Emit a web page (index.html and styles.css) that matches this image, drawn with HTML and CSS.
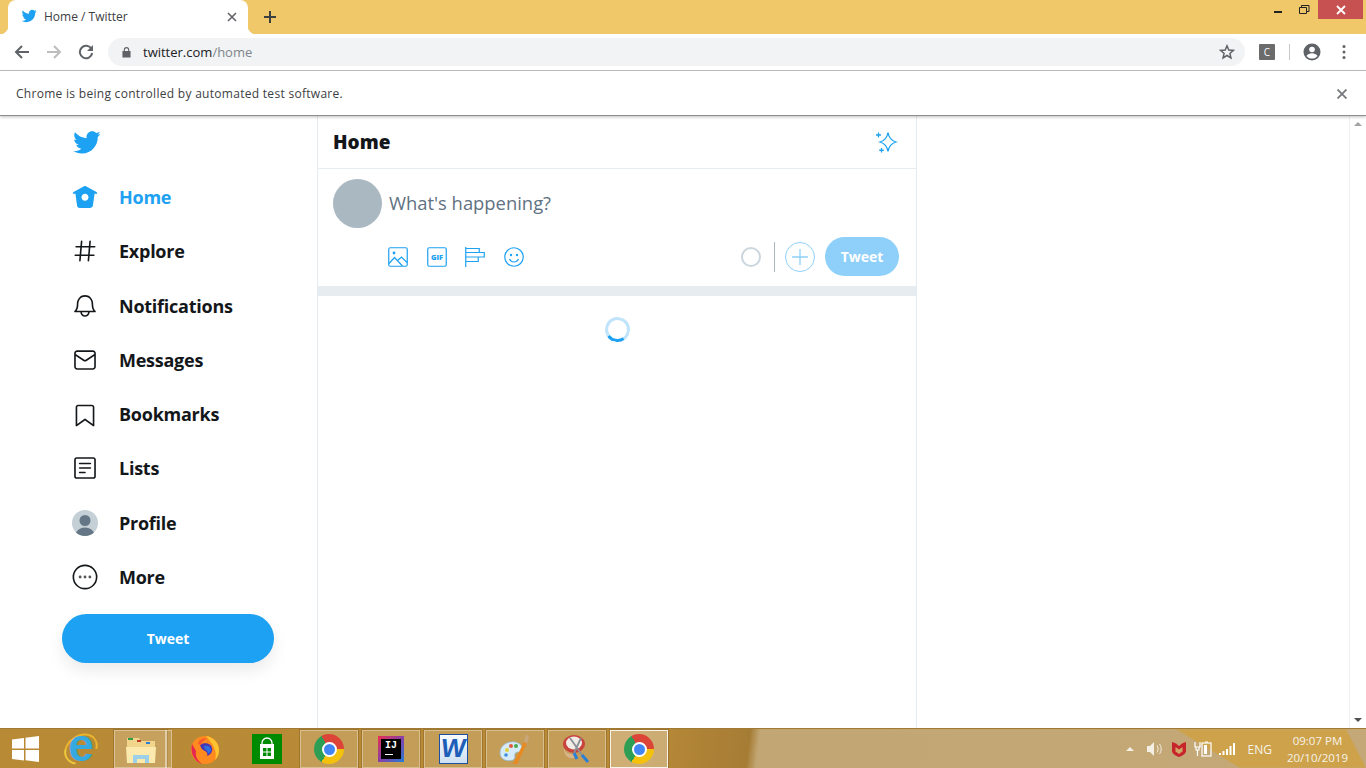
FILE: index.html
```html
<!DOCTYPE html>
<html lang="en">

<head>
  <meta charset="UTF-8">
  <title>Home / Twitter</title>
  <link rel="stylesheet" href="styles.css">
</head>

<body>
  <!-- browser frame -->
  <header class="browser">
    <div class="titlebar">
      <div class="tab">
        <svg class="tab-icon" viewBox="0 0 24 24"><path class="blue" d="M23.643 4.937c-.835.37-1.732.62-2.675.733.962-.576 1.7-1.49 2.048-2.578-.9.534-1.897.922-2.958 1.13-.85-.904-2.06-1.47-3.4-1.47-2.572 0-4.658 2.086-4.658 4.66 0 .364.042.718.12 1.06-3.873-.195-7.304-2.05-9.602-4.868-.4.69-.63 1.49-.63 2.342 0 1.616.823 3.043 2.072 3.878-.764-.025-1.482-.234-2.11-.583v.06c0 2.257 1.605 4.14 3.737 4.568-.392.106-.803.162-1.227.162-.3 0-.593-.028-.877-.082.593 1.85 2.313 3.198 4.352 3.234-1.595 1.25-3.604 1.995-5.786 1.995-.376 0-.747-.022-1.112-.065 2.062 1.323 4.51 2.093 7.14 2.093 8.57 0 13.255-7.098 13.255-13.254 0-.2-.005-.402-.014-.602.91-.658 1.7-1.477 2.323-2.41z"/></svg>
        <span class="tab-title">Home / Twitter</span>
        <svg class="tab-close" viewBox="0 0 10 10"><path d="M1 1l8 8M9 1l-8 8"/></svg>
      </div>
      <svg class="new-tab" viewBox="0 0 12 12"><path d="M6 0v12M0 6h12"/></svg>
      <div class="win-controls">
        <svg class="win-btn" viewBox="0 0 26 19"><path d="M8 12h8" stroke="#222" stroke-width="2"/></svg>
        <svg class="win-btn" viewBox="0 0 26 19"><path d="M7.500 7.500h7v6h-7zM9.500 7V5.500h7.500v6h-2.500" fill="none" stroke="#222" stroke-width="1"/></svg>
        <div class="win-close"><svg viewBox="0 0 10 10"><path d="M1 1l8 8M9 1l-8 8"/></svg></div>
      </div>
    </div>

    <div class="toolbar">
      <svg class="tool" viewBox="0 0 16 16"><path d="M15 8H2M8 2L2 8l6 6" fill="none" stroke="#5f6368" stroke-width="2"/></svg>
      <svg class="tool" viewBox="0 0 16 16"><path d="M1 8h13M8 2l6 6-6 6" fill="none" stroke="#bdbdbd" stroke-width="2"/></svg>
      <svg class="tool" viewBox="0 0 16 16"><path d="M13.500 5A6.200 6.200 0 1 0 14.200 9" fill="none" stroke="#5f6368" stroke-width="2"/><path d="M15 1v6H9z" fill="#5f6368"/></svg>
      <div class="omnibox">
        <svg class="lock" viewBox="0 0 10 12"><path d="M2 5V3.500a3 3 0 0 1 6 0V5h1.500v7H.5V5zm1.200 0h3.600V3.500a1.800 1.800 0 0 0-3.600 0z" fill="#5f6368"/></svg>
        <span class="url">twitter.com<span class="url-path">/home</span></span>
        <svg class="star" viewBox="0 0 16 16"><path d="M8 1.800l1.800 4.200 4.600.4-3.500 3 1.050 4.500L8 11.500l-3.950 2.400L5.100 9.400l-3.500-3 4.600-.4z" fill="none" stroke="#5f6368" stroke-width="1.500"/></svg>
      </div>
      <div class="ext">C</div>
      <div class="tool-sep"></div>
      <svg class="profile" viewBox="0 0 18 18"><circle cx="9" cy="9" r="8.500" fill="#5f6368"/><circle cx="9" cy="6.500" r="2.800" fill="#fff"/><path d="M3.500 13c1-2 3.500-2.800 5.500-2.800s4.500.8 5.500 2.800c-1.200 1.600-3.300 2.600-5.500 2.600s-4.300-1-5.500-2.600z" fill="#fff"/></svg>
      <svg class="dots" viewBox="0 0 4 16"><circle cx="2" cy="2.500" r="1.500"/><circle cx="2" cy="8" r="1.500"/><circle cx="2" cy="13.500" r="1.500"/></svg>
    </div>

    <div class="infobar">
      <span>Chrome is being controlled by automated test software.</span>
      <svg class="info-close" viewBox="0 0 10 10"><path d="M0.500 0.500l9 9M9.500 0.500l-9 9"/></svg>
    </div>
  </header>

  <!-- page -->
  <div class="page">
    <aside class="sidebar">
      <div class="logo">
        <svg viewBox="0 0 24 24"><path class="blue" d="M23.643 4.937c-.835.37-1.732.62-2.675.733.962-.576 1.7-1.49 2.048-2.578-.9.534-1.897.922-2.958 1.13-.85-.904-2.06-1.47-3.4-1.47-2.572 0-4.658 2.086-4.658 4.66 0 .364.042.718.12 1.06-3.873-.195-7.304-2.05-9.602-4.868-.4.69-.63 1.49-.63 2.342 0 1.616.823 3.043 2.072 3.878-.764-.025-1.482-.234-2.11-.583v.06c0 2.257 1.605 4.14 3.737 4.568-.392.106-.803.162-1.227.162-.3 0-.593-.028-.877-.082.593 1.85 2.313 3.198 4.352 3.234-1.595 1.25-3.604 1.995-5.786 1.995-.376 0-.747-.022-1.112-.065 2.062 1.323 4.51 2.093 7.14 2.093 8.57 0 13.255-7.098 13.255-13.254 0-.2-.005-.402-.014-.602.91-.658 1.7-1.477 2.323-2.41z"/></svg>
      </div>
      <nav class="nav">
        <a class="nav-item active">
          <svg class="nav-icon" viewBox="0 0 24 24"><path d="M22.580 7.350L12.475 1.897c-.297-.16-.654-.16-.95 0L1.425 7.350c-.486.264-.667.870-.405 1.356.18.335.525.525.880.525.160 0 .324-.038.475-.120l.734-.396 1.590 11.250c.216 1.214 1.270 2.096 2.500 2.096h9.600c1.230 0 2.284-.882 2.504-2.110l1.590-11.236.734.396c.485.263 1.092.082 1.354-.404.263-.486.080-1.093-.404-1.355zM12 15.435c-1.795 0-3.250-1.455-3.250-3.250s1.455-3.250 3.250-3.250 3.250 1.455 3.250 3.250-1.455 3.250-3.250 3.250z"/></svg>
          Home
        </a>
        <a class="nav-item">
          <svg class="nav-icon" viewBox="0 0 24 24"><path d="M21 7.337h-3.930l.372-4.272c.036-.412-.27-.775-.682-.812-.417-.03-.776.27-.812.683l-.383 4.400h-6.320l.37-4.270c.037-.413-.27-.776-.68-.813-.42-.03-.777.27-.813.683l-.382 4.400H3.782c-.414 0-.75.337-.75.75s.336.75.75.75H7.610l-.55 6.327H3c-.414 0-.75.336-.75.75s.336.75.75.75h3.930l-.372 4.272c-.036.412.27.775.682.812l.066.003c.385 0 .712-.295.746-.686l.383-4.400h6.320l-.37 4.270c-.036.413.27.776.682.813l.066.003c.385 0 .712-.295.746-.686l.382-4.400h3.957c.413 0 .75-.337.75-.75s-.337-.75-.75-.75H16.390l.55-6.327H21c.414 0 .75-.336.75-.75s-.336-.75-.75-.75zm-6.115 7.826h-6.320l.55-6.326h6.320l-.55 6.326z"/></svg>
          Explore
        </a>
        <a class="nav-item">
          <svg class="nav-icon" viewBox="0 0 24 24"><path d="M21.697 16.468c-.02-.016-2.140-1.640-2.103-6.030.02-2.532-.812-4.782-2.347-6.335C15.872 2.710 14.010 1.940 12.005 1.930h-.013c-2.004.01-3.866.78-5.242 2.174-1.534 1.553-2.368 3.802-2.346 6.334.037 4.330-2.020 5.967-2.102 6.030-.26.193-.366.53-.265.838.102.308.39.515.712.515h4.920c.102 2.310 1.997 4.160 4.330 4.160s4.226-1.850 4.327-4.160h4.922c.322 0 .61-.206.71-.514.103-.307-.003-.645-.263-.838zM12 20.478c-1.505 0-2.730-1.177-2.828-2.658h5.656c-.1 1.480-1.323 2.660-2.828 2.660zM4.380 16.320c.74-1.132 1.548-3.028 1.524-5.896-.018-2.160.644-3.982 1.913-5.267C8.910 4.050 10.397 3.437 12 3.430c1.603.008 3.087.62 4.180 1.728 1.270 1.285 1.933 3.106 1.915 5.267-.024 2.868.785 4.765 1.525 5.896H4.380z"/></svg>
          Notifications
        </a>
        <a class="nav-item">
          <svg class="nav-icon" viewBox="0 0 24 24"><path d="M19.250 3.018H4.750C3.233 3.018 2 4.252 2 5.770v12.495c0 1.518 1.233 2.753 2.750 2.753h14.500c1.517 0 2.750-1.235 2.750-2.753V5.770c0-1.518-1.233-2.752-2.750-2.752zm-14.500 1.500h14.500c.69 0 1.250.56 1.250 1.250v.714l-8.050 5.367c-.273.18-.626.182-.9-.002L3.500 6.482v-.714c0-.69.56-1.250 1.250-1.250zm14.500 14.998H4.750c-.69 0-1.250-.56-1.250-1.250V8.240l7.240 4.830c.383.256.822.384 1.260.384.44 0 .877-.128 1.260-.383l7.240-4.830v10.022c0 .69-.56 1.250-1.250 1.250z"/></svg>
          Messages
        </a>
        <a class="nav-item">
          <svg class="nav-icon" viewBox="0 0 24 24"><path d="M19.900 23.500c-.157 0-.312-.05-.442-.144L12 17.928l-7.458 5.430c-.228.164-.53.19-.782.06-.25-.127-.41-.385-.41-.667V5.600c0-1.240 1.010-2.250 2.250-2.250h12.798c1.240 0 2.250 1.010 2.250 2.250v17.150c0 .282-.158.54-.41.668-.106.055-.223.082-.34.082zM12 16.250c.155 0 .31.048.44.144l6.710 4.883V5.600c0-.412-.337-.75-.75-.75H5.600c-.413 0-.75.338-.75.75v15.677l6.710-4.883c.13-.096.285-.144.44-.144z"/></svg>
          Bookmarks
        </a>
        <a class="nav-item">
          <svg class="nav-icon" viewBox="0 0 24 24"><path d="M19.750 22H4.250C3.010 22 2 20.990 2 19.750V4.250C2 3.010 3.010 2 4.250 2h15.500C20.990 2 22 3.010 22 4.250v15.500c0 1.240-1.010 2.250-2.250 2.250zM4.250 3.500c-.414 0-.75.337-.75.75v15.500c0 .413.336.75.75.75h15.500c.414 0 .75-.337.75-.75V4.250c0-.413-.336-.75-.75-.75H4.250z"/><path d="M17 8.640H7c-.414 0-.75-.337-.75-.75s.336-.75.75-.75h10c.414 0 .75.336.75.75s-.336.75-.75.75zm0 4.110H7c-.414 0-.75-.336-.75-.75s.336-.75.75-.75h10c.414 0 .75.336.75.75s-.336.75-.75.75zm-5 4.110H7c-.414 0-.75-.335-.75-.75s.336-.75.75-.75h5c.414 0 .75.337.75.75s-.336.75-.75.75z"/></svg>
          Lists
        </a>
        <a class="nav-item">
          <svg class="nav-icon" viewBox="0 0 26 26"><defs><clipPath id="avatar-clip"><circle cx="13" cy="13" r="13"/></clipPath></defs><circle cx="13" cy="13" r="13" fill="#c4cfd6"/><g clip-path="url(#avatar-clip)" fill="#657786"><circle cx="13" cy="10.500" r="5.500"/><ellipse cx="13" cy="24" rx="9" ry="6.500"/></g></svg>
          Profile
        </a>
        <a class="nav-item">
          <svg class="nav-icon" viewBox="0 0 24 24"><circle cx="12" cy="12" r="10.750" fill="none" stroke="#14171a" stroke-width="1.500"/><circle cx="7.500" cy="12" r="1.300" fill="#555"/><circle cx="12" cy="12" r="1.300" fill="#555"/><circle cx="16.500" cy="12" r="1.300" fill="#555"/></svg>
          More
        </a>
      </nav>
      <button class="tweet-big">Tweet</button>
    </aside>

    <main class="feed">
      <div class="feed-head">
        <h2>Home</h2>
        <svg class="sparkle" viewBox="0 0 24 24"><path d="M14 2.500c.8 5.200 2.800 8 8 9.500-5.200 1.500-7.200 4.300-8 9.500-.8-5.200-2.800-8-8-9.500 5.200-1.500 7.200-4.300 8-9.500z" fill="none" stroke="#1da1f2" stroke-width="1.300"/><path d="M4.500 2.500v5M2 5h5M7.500 18v4.500M5.250 20.250h4.500" stroke="#1da1f2" stroke-width="1.300"/></svg>
      </div>

      <div class="compose">
        <div class="compose-top">
          <div class="avatar"></div>
          <div class="placeholder">What's happening?</div>
        </div>
        <div class="compose-bar">
          <div class="media-icons">
            <svg class="media" viewBox="0 0 20 20"><rect x=".75" y=".75" width="18.500" height="18.500" rx="1.500"/><circle cx="6" cy="6" r="1.400" class="dot"/><path d="M1 16.500l5.500-6 8 8.500M9.500 13.500l4-3.500 5.500 5.500"/></svg>
            <svg class="media" viewBox="0 0 20 20"><rect x=".75" y=".75" width="18.500" height="18.500" rx="1.500"/><text x="10" y="13" class="gif-text">GIF</text></svg>
            <svg class="media" viewBox="0 0 20 20"><path d="M.75 0v20M.75 1.500h13.500v4H.75M.75 5.500h18.500v4.500H.75M.75 10h12.500v4.500H.75"/></svg>
            <svg class="media" viewBox="0 0 20 20"><circle cx="10" cy="10" r="9.250"/><circle cx="7" cy="8" r="1.200" class="dot"/><circle cx="13" cy="8" r="1.200" class="dot"/><path d="M5.500 12c1 2 2.700 3 4.500 3s3.500-1 4.500-3"/></svg>
          </div>
          <div class="counter"></div>
          <div class="bar-sep"></div>
          <svg class="add" viewBox="0 0 30 30"><circle cx="15" cy="15" r="14.500"/><path d="M15 7v16M7 15h16"/></svg>
          <button class="tweet-small">Tweet</button>
        </div>
      </div>

      <div class="band"></div>
      <div class="loading"><div class="spinner"></div></div>
    </main>

    <div class="rightcol"></div>

    <div class="scrollbar">
      <span class="arrow-up"></span>
      <span class="arrow-down"></span>
    </div>
  </div>

  <!-- windows taskbar -->
  <footer class="taskbar">
    <div class="start">
      <svg viewBox="0 0 27 26"><path d="M0 3.500L12 2v10.500H0zM13.500 1.800L27 0v12.500H13.500zM0 14h12v10.500L0 23zM13.500 14H27v12l-13.500-1.800z" fill="#fff"/></svg>
    </div>
    <div class="task plain ie-wrap">
      <div class="ie"><span class="ie-e">e</span></div>
    </div>
    <div class="task open explorer">
      <svg class="task-icon" viewBox="0 0 32 32"><path d="M2 5h12l2 3h14v22H2z" fill="#f0d58a"/><path d="M3 5h5v2H3z" fill="#2f9e44"/><path d="M12 7h4v2h-4z" fill="#c0392b"/><path d="M21 9h4v2h-4z" fill="#2b7fd4"/><path d="M1 14h30l-1 16H2z" fill="#fbe9ad"/><path d="M8 30v-8h16v8h-4v-4h-8v4z" fill="#9ccfe8"/></svg>
    </div>
    <div class="task plain ff">
      <svg class="task-icon" viewBox="0 0 32 32"><circle cx="16" cy="17" r="14" fill="#ff8a1f"/><path d="M17 3c7 1 13 7 13 14 0 5-2 8-4 10 2-6 1-13-9-24z" fill="#ffc42f"/><path d="M3 11c-2 9 2 17 10 20-5-4-7-8-6-13z" fill="#e6264f"/><path d="M11 12c4-3 11-2 12 3 1 4-2 7-5 8 1-2 0-4-2-5-3-1-4-3-5-6z" fill="#4a35b5"/><path d="M15 13c3-1 6 0 7 3 .5 2-1 4-3 5 0-2-1-3-2-4-1-.5-2-2-2-4z" fill="#2f6fe0"/><path d="M10 8c2-2 5-3 7-3-1 2-2 3-4 4l-1 3-3-1z" fill="#ff5a2f"/></svg>
    </div>
    <div class="task plain store-wrap">
      <div class="store">
        <svg viewBox="0 0 30 30"><path d="M10 12V9a5 5 0 0 1 10 0v3" fill="none" stroke="#fff" stroke-width="1.300"/><path d="M8 10h14v15H8z" fill="#fff"/><path d="M11 14h3.500v3.500H11zM15.500 14H19v3.500h-3.500zM11 18.500h3.500V22H11zM15.500 18.500H19V22h-3.500z" fill="#008a00"/></svg>
      </div>
    </div>
    <div class="task open"><div class="chrome-logo"><span></span></div></div>
    <div class="task open">
      <div class="idea"><div class="idea-inner"><span class="idea-text">IJ</span><i class="idea-line"></i></div></div>
    </div>
    <div class="task open">
      <div class="word"><span class="word-w">W</span></div>
    </div>
    <div class="task open">
      <svg class="task-icon" viewBox="0 0 32 32"><path d="M1 20c0-8 8-12 15-11 6 1 9 6 6 9-2 2-5 0-6 3-1 2 1 4-2 6-5 2-13 0-13-7z" fill="#d6ebf7" stroke="#8fb6d2" stroke-width=".7"/><circle cx="8" cy="17" r="2" fill="#e0d23c"/><circle cx="12" cy="13" r="2" fill="#e05a3c"/><circle cx="17" cy="13" r="2" fill="#4aa84a"/><circle cx="7" cy="22" r="1.800" fill="#3c8fe0"/><path d="M14 31L25 9l3 1.500L18 31z" fill="#e88a1f"/><path d="M25 9l2-8 3 3-2 6.500z" fill="#c9a77a"/></svg>
    </div>
    <div class="task open">
      <svg class="task-icon" viewBox="0 0 32 32"><ellipse cx="13" cy="11" rx="11" ry="9" fill="#c9423c"/><ellipse cx="13" cy="10" rx="8" ry="6.500" fill="#f1ede6"/><path d="M3 14c0 6 6 8 12 7l-2 4c-6 1-11-3-10-11z" fill="#d9b48a"/><path d="M9 5l12 17M20 5L13 20" stroke="#8b8f96" stroke-width="1.800"/><path d="M21 22l6 7M13 20l3 6" stroke="#2b7fd4" stroke-width="3"/></svg>
    </div>
    <div class="task open current"><div class="chrome-logo"><span></span></div></div>

    <div class="tray">
      <span class="tray-arrow"></span>
      <svg class="tray-icon" viewBox="0 0 18 16"><path d="M1 5h3l4-4v14l-4-4H1z" fill="#f4efe4"/><path d="M11 4.500c1.500 2 1.500 5 0 7M13.500 3c2.200 3 2.200 7 0 10" fill="none" stroke="#f4efe4"/></svg>
      <svg class="tray-icon" viewBox="0 0 16 16"><path d="M1 1l4 1.500 3 2.500 3-2.500L15 1v9c0 2.500-3.500 5-7 6-3.500-1-7-3.500-7-6z" fill="#c8242c"/><path d="M4.500 6v4.500L8 13l3.500-2.500V6L8 8.500z" fill="#cfa766"/></svg>
      <svg class="tray-icon" viewBox="0 0 18 16"><path d="M1 1v5h5V1M2 6v3h3V6M3.500 9v6" fill="none" stroke="#fff" stroke-width="1.200"/><rect x="8" y="2" width="9" height="13" fill="none" stroke="#fff" stroke-width="1.200"/><rect x="10" y="4" width="3" height="9" fill="#fff"/><path d="M11 1h3" stroke="#fff"/></svg>
      <svg class="tray-icon" viewBox="0 0 18 14"><path d="M1 11h2v2H1zM4.500 9h2v4h-2zM8 7h2v6H8zM11.500 4h2v9h-2zM15 1h2v12h-2z" fill="#fff"/></svg>
      <span class="lang">ENG</span>
      <div class="clock"><div>09:07 PM</div><div>20/10/2019</div></div>
    </div>
  </footer>
</body>

</html>
```

FILE: styles.css
```css
/* Colors */
:root {
  --blue: #1da1f2;
  --blue-light: #8ed0f9;
  --ink: #14171a;
  --line: #e6ecf0;
  --frame: #f0c869;
}

* {
  box-sizing: border-box;
}

html, body {
  height: 768px;
  overflow: hidden;
}

body {
  margin: 0;
  display: flex;
  flex-direction: column;
  background: #fff;
  color: var(--ink);
  font-family: "Open Sans", "Noto Sans", sans-serif;
}

.blue {fill: var(--blue)}

/* browser frame */
.browser {
  flex: none;
  position: relative;
  z-index: 2;
  box-shadow: 0 1px 3px rgba(0,0,0,0.25);
}

.titlebar {
  height: 34px;
  display: flex;
  align-items: center;
  background: var(--frame);
  padding-left: 8px;
}

.tab {
  position: relative;
  width: 240px;
  height: 34px;
  display: flex;
  align-items: center;
  background: #fff;
  border-radius: 8px 8px 0 0;
  padding: 0 0 2px 13px;
}
.tab::before, .tab::after {
  content: '';
  position: absolute;
  bottom: 0;
  width: 8px;
  height: 8px;
}
.tab::before {
  left: -8px;
  background: radial-gradient(circle at 0 0, transparent 8px, #fff 8.5px);
}
.tab::after {
  right: -8px;
  background: radial-gradient(circle at 100% 0, transparent 8px, #fff 8.5px);
}
.tab-icon {
  width: 16px;
  height: 16px;
}
.tab-title {
  margin-left: 7px;
  font-size: 12px;
  color: #3c4043;
}
.tab-close {
  position: absolute;
  right: 11px;
  top: 12px;
  width: 10px;
  height: 10px;
}
.tab-close path {
  fill: none;
  stroke: #5f6368;
  stroke-width: 1.6;
}
.new-tab {
  width: 12px;
  height: 12px;
  margin-left: 16px;
}
.new-tab path {
  fill: none;
  stroke: #3c4043;
  stroke-width: 2;
}

.win-controls {
  margin-left: auto;
  align-self: flex-start;
  display: flex;
  padding-right: 3px;
}
.win-btn {
  width: 26px;
  height: 19px;
}
.win-close {
  width: 45px;
  height: 19px;
  background: #c75050;
  display: flex;
  align-items: center;
  justify-content: center;
}
.win-close svg {
  width: 10px;
  height: 10px;
}
.win-close path {
  fill: none;
  stroke: #fff;
  stroke-width: 1.8;
}

.toolbar {
  height: 37px;
  display: flex;
  align-items: center;
  padding: 0 0 1px 14px;
  background: #fff;
  border-bottom: 1px solid #b8b8b8;
}
.tool {
  width: 16px;
  height: 16px;
  margin-right: 16px;
}
.omnibox {
  width: 1137px;
  height: 28px;
  margin-left: -2px;
  display: flex;
  align-items: center;
  padding: 0 10px 0 14px;
  background: #f1f3f4;
  border-radius: 14px;
}
.lock {
  width: 9px;
  height: 12px;
}
.url {
  margin-left: 12px;
  font-size: 13px;
  color: #202124;
}
.url-path {color: #80868b}
.star {
  width: 16px;
  height: 16px;
  margin-left: auto;
}
.ext {
  width: 16px;
  height: 16px;
  margin-left: 14px;
  background: #6b6b6b;
  border-radius: 1px;
  color: #fff;
  font-size: 10px;
  line-height: 16px;
  text-align: center;
}
.tool-sep {
  width: 1px;
  height: 16px;
  margin-left: 14px;
  background: #c8c8c8;
}
.profile {
  width: 18px;
  height: 18px;
  margin-left: 13px;
}
.dots {
  width: 4px;
  height: 16px;
  margin-left: 21px;
  fill: #5f6368;
}

.infobar {
  height: 45px;
  display: flex;
  align-items: center;
  justify-content: space-between;
  padding: 1px 19px 0 16px;
  background: #fff;
  border-bottom: 1px solid #8e8e8e;
  font-size: 12px;
  letter-spacing: .29px;
  color: #3c4043;
}
.info-close {
  width: 10px;
  height: 10px;
}
.info-close path {
  fill: none;
  stroke: #75787c;
  stroke-width: 1.8;
}

/* page */
.page {
  flex: 1;
  min-height: 0;
  display: flex;
}

.sidebar {
  flex: none;
  width: 318px;
  border-right: 1px solid var(--line);
}
.logo {
  height: 53.8px;
  padding: 12px 0 0 72px;
}
.logo svg {
  width: 29px;
  height: 29px;
}
.nav {
  display: grid;
  grid-auto-rows: 54.3px;
  padding-left: 72px;
}
.nav-item {
  display: flex;
  align-items: center;
  gap: 21px;
  font-size: 18px;
  font-weight: 700;
  letter-spacing: -.25px;
}
.nav-icon {
  flex: none;
  width: 26px;
  height: 26px;
  fill: var(--ink);
}
.nav-item.active {color: var(--blue)}
.active .nav-icon {fill: var(--blue)}

.tweet-big {
  display: block;
  width: 212px;
  height: 49px;
  margin: 10.2px 0 0 62px;
  border: 0;
  border-radius: 25px;
  background: var(--blue);
  color: #fff;
  font: 700 14px "Open Sans", sans-serif;
  box-shadow: 0 8px 16px rgba(0,0,0,0.08);
}

.feed {
  flex: none;
  width: 599px;
  border-right: 1px solid var(--line);
}
.feed-head {
  height: 53px;
  display: flex;
  align-items: center;
  justify-content: space-between;
  padding: 0 18px 0 15px;
  border-bottom: 1px solid var(--line);
}
.feed-head h2 {
  margin: 0;
  font-size: 19px;
  font-weight: 800;
}
.sparkle {
  width: 24px;
  height: 24px;
}

.compose {
  height: 117px;
  padding: 10px 17px 0 15px;
}
.compose-top {
  height: 49px;
  display: flex;
  align-items: center;
  gap: 7px;
}
.avatar {
  width: 49px;
  height: 49px;
  border-radius: 50%;
  background: #aab8c2;
}
.placeholder {
  padding-bottom: 2px;
  font-size: 18.4px;
  color: #5f7182;
}
.compose-bar {
  display: flex;
  align-items: center;
  height: 39px;
  margin-top: 9px;
  padding-left: 55px;
}
.media-icons {
  display: flex;
  gap: 18.5px;
}
.media {
  width: 20px;
  height: 20px;
}
.media rect, .media circle, .media path {
  fill: none;
  stroke: var(--blue);
  stroke-width: 1.2;
}
.media .dot {
  fill: var(--blue);
  stroke: none;
}
.gif-text {
  font-size: 7.5px;
  font-weight: 800;
  fill: var(--blue);
  text-anchor: middle;
}
.counter {
  width: 20px;
  height: 20px;
  margin-left: auto;
  border: 2px solid #ccd6dd;
  border-radius: 50%;
}
.bar-sep {
  width: 1px;
  height: 30px;
  margin: 0 10px 0 13px;
  background: #aab8c2;
}
.add {
  width: 30px;
  height: 30px;
}
.add circle, .add path {
  fill: none;
  stroke: var(--blue-light);
}
.add path {stroke-width: 1.3}
.tweet-small {
  width: 74px;
  height: 39px;
  margin-left: 10px;
  border: 0;
  border-radius: 20px;
  background: var(--blue-light);
  color: #fff;
  font: 700 14px "Open Sans", sans-serif;
}

.band {
  height: 10px;
  background: var(--line);
}
.loading {
  display: flex;
  justify-content: center;
  padding-top: 21px;
}
.spinner {
  width: 25px;
  height: 25px;
  border: 3px solid #c0e4fb;
  border-bottom-color: var(--blue);
  border-radius: 50%;
  transform: rotate(10deg);
}

.rightcol {flex: 1}

.scrollbar {
  flex: none;
  width: 17px;
  display: flex;
  flex-direction: column;
  justify-content: space-between;
  align-items: center;
  padding: 6px 0;
  background: #fff;
  border-left: 1px solid #f0f0f0;
}
.arrow-up, .arrow-down {
  width: 0;
  height: 0;
  border-left: 4px solid transparent;
  border-right: 4px solid transparent;
}
.arrow-up {border-bottom: 4px solid #a3a3a3}
.arrow-down {border-top: 4px solid #505050}

/* windows taskbar */
.taskbar {
  flex: none;
  height: 40px;
  display: flex;
  padding-top: 1px;
  border-top: 1px solid #a07a35;
  background: linear-gradient(97deg, #b88a36 0, #b98b38 640px, #a67c35 745px, #c2a774 755px, #c4a877 100%);
  position: relative;
  z-index: 2;
}
/* gold streak behind the tray */
.taskbar::before {
  content: '';
  position: absolute;
  top: 0;
  bottom: 0;
  left: 1176px;
  right: 0;
  background: #cda24a;
  clip-path: polygon(0 0, 170px 0, 190px 100%, 64px 100%);
  filter: blur(1px);
}
.start {
  width: 50px;
  display: flex;
  align-items: center;
  justify-content: center;
}
.start svg {
  width: 27px;
  height: 26px;
}
.task {
  flex: none;
  width: 58px;
  height: 38px;
  margin-right: 4px;
  display: flex;
  align-items: center;
  justify-content: center;
}
.task.plain {width: 62px}
.task.ie-wrap {margin-right: 2px}
.task.ff {margin-right: 0}
.task.store-wrap {margin-right: 2px}
.task.open {
  background: rgba(255,255,255,0.16);
  border: 1px solid rgba(255,255,255,0.35);
  box-shadow: 0 0 0 1px rgba(90,60,10,0.25);
}
.task.explorer {
  width: 53px;
  margin-right: 7px;
  position: relative;
  background: rgba(255,255,255,0.2);
}
.task.explorer::after {
  content: '';
  position: absolute;
  top: -1px;
  bottom: -1px;
  right: -6px;
  width: 5px;
  background: rgba(255,255,255,0.16);
  border: 1px solid rgba(255,255,255,0.35);
}
.task.current {
  background: rgba(255,255,255,0.3);
  border-color: rgba(255,255,255,0.85);
}
.task-icon {
  width: 32px;
  height: 32px;
}

.ie {
  position: relative;
  width: 32px;
  height: 32px;
  display: flex;
  align-items: center;
  justify-content: center;
}
.ie::before {
  content: '';
  position: absolute;
  inset: 2px -2px;
  border: 2px solid #e8b52c;
  border-left-color: #f0c93c;
  border-bottom-color: transparent;
  border-radius: 50%;
  transform: rotate(-35deg);
}
.ie-e {
  position: relative;
  font: 700 46px/32px "Liberation Sans", sans-serif;
  color: #35a9e0;
  margin-top: -9px;
}

.store {
  width: 30px;
  height: 30px;
  background: #008a00;
}
.store svg {
  display: block;
  width: 30px;
  height: 30px;
}

.chrome-logo {
  width: 30px;
  height: 30px;
  display: flex;
  align-items: center;
  justify-content: center;
  border-radius: 50%;
  background: conic-gradient(from -30deg, #db4437 0 120deg, #f4c20d 120deg 240deg, #2e9e55 240deg 360deg);
}
.chrome-logo span {
  box-sizing: content-box;
  width: 11px;
  height: 11px;
  border-radius: 50%;
  background: #4285f4;
  border: 2px solid #fff;
}

.idea {
  width: 26px;
  height: 26px;
  padding: 3px;
  background: linear-gradient(135deg, #e8304f, #8a3ea8 50%, #1f7fd8);
}
.idea-inner {
  width: 20px;
  height: 20px;
  background: #000;
  display: flex;
  flex-direction: column;
  padding: 1px 0 0 4px;
}
.idea-text {
  font: 700 10px/12px "Liberation Mono", monospace;
  color: #fff;
}
.idea-line {
  width: 8px;
  height: 1px;
  margin-top: 2px;
  background: #fff;
}

.word {
  width: 29px;
  height: 30px;
  background: linear-gradient(#f8fbff, #cfe0f2);
  border: 1px solid #1d4f9e;
  display: flex;
  justify-content: center;
  overflow: hidden;
}
.word-w {
  font: 700 26px/26px "Liberation Sans", sans-serif;
  color: #1d5fb8;
  transform: skewX(-8deg);
}

.tray {
  position: relative;
  margin-left: auto;
  display: flex;
  align-items: center;
  height: 38px;
  padding-right: 18px;
  color: #f7f3ea;
}
.tray-arrow {
  width: 0;
  height: 0;
  margin-right: 12px;
  border-left: 4px solid transparent;
  border-right: 4px solid transparent;
  border-bottom: 4px solid #f4efe4;
}
.tray-icon {
  width: 18px;
  height: 16px;
  margin-right: 6px;
}
.lang {
  margin: 0 15px 0 6px;
  font-size: 12px;
}
.clock {
  font-size: 11.5px;
  line-height: 17px;
  text-align: center;
}
```
